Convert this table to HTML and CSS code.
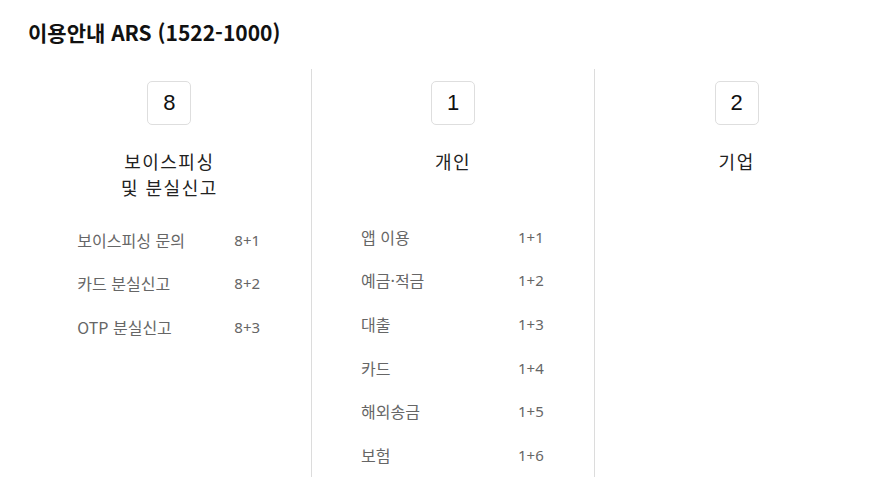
FILE: index.html
```html
<!DOCTYPE html>
<html lang="ko">
<head>
    <meta charset="UTF-8">
    <meta name="viewport" content="width=device-width, initial-scale=1.0">
    <title>이용안내 ARS</title>
    <link rel="stylesheet" href="styles.css">
</head>
<body>
    <div class="page">
        <h1>이용안내 ARS (1522-1000)</h1>
        <div class="ars">
            <div class="ars-col">
                <div class="key">8</div>
                <h2>보이스피싱<br>및 분실신고</h2>
                <ul class="menu menu-two-line">
                    <li><span>보이스피싱 문의</span><span class="num">8+1</span></li>
                    <li><span>카드 분실신고</span><span class="num">8+2</span></li>
                    <li><span>OTP 분실신고</span><span class="num">8+3</span></li>
                </ul>
            </div>
            <div class="ars-col">
                <div class="key">1</div>
                <h2>개인</h2>
                <ul class="menu">
                    <li><span>앱 이용</span><span class="num">1+1</span></li>
                    <li><span>예금·적금</span><span class="num">1+2</span></li>
                    <li><span>대출</span><span class="num">1+3</span></li>
                    <li><span>카드</span><span class="num">1+4</span></li>
                    <li><span>해외송금</span><span class="num">1+5</span></li>
                    <li><span>보험</span><span class="num">1+6</span></li>
                </ul>
            </div>
            <div class="ars-col">
                <div class="key">2</div>
                <h2>기업</h2>
            </div>
        </div>
    </div>
</body>
</html>
```

FILE: styles.css
```css
body {
    margin: 0;
    background-color: #fff;
    color: #222;
    font-family: 'Noto Sans CJK KR', 'Noto Sans', sans-serif;
}
.page {
    padding: 20px 2px 0 28px;
}
h1 {
    margin: 0 0 25px;
    font-size: 21px;
    line-height: 24px;
    font-weight: 700;
    color: #111;
}
.ars {
    display: flex;
}
.ars-col {
    flex: 1;
    display: flex;
    flex-direction: column;
    align-items: center;
    padding-top: 12px;
    border-left: 1px solid #dcdcdc;
}
.ars-col:first-child {
    border-left: none;
}
.key {
    width: 42px;
    height: 42px;
    border: 1px solid #dedede;
    border-radius: 5px;
    display: flex;
    align-items: center;
    justify-content: center;
    font-family: 'Liberation Sans', sans-serif;
    font-size: 22px;
    color: #111;
}
h2 {
    margin: 23px 0 0;
    min-height: 52px;
    font-size: 18px;
    line-height: 26px;
    font-weight: 400;
    letter-spacing: 1.5px;
    text-align: center;
    color: #222;
}
.menu {
    list-style: none;
    margin: 15px 0 0;
    padding: 0;
    width: 184px;
}
.menu-two-line {
    margin-top: 18px;
}
.menu li {
    display: flex;
    align-items: center;
    height: 43.6px;
    font-size: 16px;
    color: #666;
}
.menu li span:first-child {
    width: 157px;
}
.menu .num {
    font-family: 'Noto Sans', sans-serif;
    font-size: 15px;
}
```
